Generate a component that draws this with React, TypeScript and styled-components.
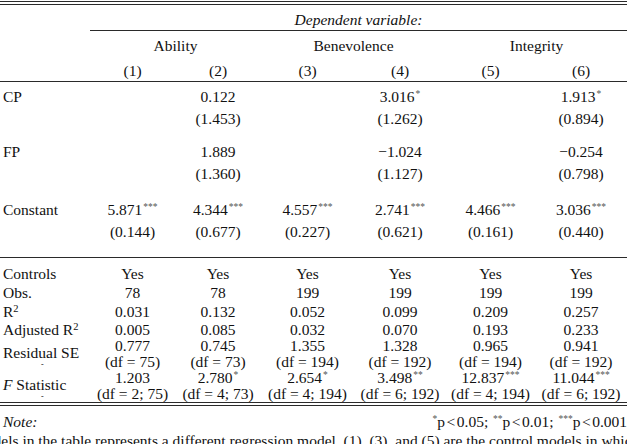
import styled, { createGlobalStyle } from 'styled-components';

const GlobalStyle = createGlobalStyle`
  html, body {
    margin: 0;
    padding: 0;
    background: #ffffff;
    overflow: hidden;
  }
  body {
    font-family: "Liberation Serif", "Times New Roman", serif;
    font-size: 15.5px;
    color: #111111;
  }
`;

const Page = styled.div`
  width: 627px;
`;

const DoubleRule = styled.div<{ $top?: number }>`
  margin-top: ${(p) => p.$top ?? 0}px;
  height: 2px;
  border-top: 1px solid #2a2a2a;
  border-bottom: 1px solid #2a2a2a;
`;

const Table = styled.table`
  width: 627px;
  border-collapse: separate;
  border-spacing: 0;
  table-layout: fixed;
`;

const Cell = styled.td<{ $h: number; $pt?: number; $line?: 'top' | 'bottom' }>`
  height: ${(p) => p.$h}px;
  padding: ${(p) => p.$pt ?? 0}px 0 0 0;
  line-height: 16px;
  text-align: center;
  vertical-align: middle;
  white-space: nowrap;
  box-sizing: content-box;
  border-top: ${(p) => (p.$line === 'top' ? '1px solid #2a2a2a' : 'none')};
  border-bottom: ${(p) => (p.$line === 'bottom' ? '1px solid #2a2a2a' : 'none')};
`;

const Label = styled(Cell)`
  text-align: left;
  text-indent: 3px;
`;

const Italic = styled.span`
  font-style: italic;
`;

const Stars = styled.sup`
  font-size: 9.5px;
  line-height: 0;
  vertical-align: 5px;
  color: #555;
  margin-left: 1px;
  text-indent: 0;
`;

const Sq = styled.sup`
  font-size: 10.5px;
  line-height: 0;
  vertical-align: 5px;
`;

const Rel = styled.span`
  margin: 0 1.5px;
`;

const Stack = styled.div`
  display: flex;
  flex-direction: column;
  align-items: center;
  line-height: 16px;
`;

const LabelStack = styled.div`
  display: flex;
  flex-direction: column;
  align-items: flex-start;
  padding-top: 6px;
`;

const Dash = styled.span`
  font-size: 8px;
  line-height: 8px;
  margin-left: 38px;
`;

const NoteRow = styled.div`
  display: flex;
  justify-content: space-between;
  align-items: center;
  padding: 8px 0 0 3px;
  line-height: 16px;
`;

const Caption = styled.p`
  margin: 3px 0 0 0;
  line-height: 16px;
  white-space: nowrap;
  overflow: hidden;
  text-indent: -28px;
`;

type Val = { v: string; s?: string };

const cols = [90, 85, 86, 93, 92, 89, 92];

const coefRows: { name: string; est: (Val | null)[]; se: (string | null)[]; gap: number }[] = [
  {
    name: 'CP',
    est: [null, { v: '0.122' }, null, { v: '3.016', s: '*' }, null, { v: '1.913', s: '*' }],
    se: [null, '(1.453)', null, '(1.262)', null, '(0.894)'],
    gap: 11,
  },
  {
    name: 'FP',
    est: [null, { v: '1.889' }, null, { v: '\u22121.024' }, null, { v: '\u22120.254' }],
    se: [null, '(1.360)', null, '(1.127)', null, '(0.798)'],
    gap: 14,
  },
  {
    name: 'Constant',
    est: [
      { v: '5.871', s: '***' },
      { v: '4.344', s: '***' },
      { v: '4.557', s: '***' },
      { v: '2.741', s: '***' },
      { v: '4.466', s: '***' },
      { v: '3.036', s: '***' },
    ],
    se: ['(0.144)', '(0.677)', '(0.227)', '(0.621)', '(0.161)', '(0.440)'],
    gap: 14,
  },
];

const stats: { name: React.ReactNode; vals: string[]; h: number; pt?: number }[] = [
  { name: 'Obs.', vals: ['78', '78', '199', '199', '199', '199'], h: 19 },
  {
    name: (
      <>
        R<Sq>2</Sq>
      </>
    ),
    vals: ['0.031', '0.132', '0.052', '0.099', '0.209', '0.257'],
    h: 19,
  },
  {
    name: (
      <>
        Adjusted R<Sq>2</Sq>
      </>
    ),
    vals: ['0.005', '0.085', '0.032', '0.070', '0.193', '0.233'],
    h: 16,
    pt: 1,
  },
];

const residual: [Val, string][] = [
  [{ v: '0.777' }, '(df = 75)'],
  [{ v: '0.745' }, '(df = 73)'],
  [{ v: '1.355' }, '(df = 194)'],
  [{ v: '1.328' }, '(df = 192)'],
  [{ v: '0.965' }, '(df = 194)'],
  [{ v: '0.941' }, '(df = 192)'],
];

const fstat: [Val, string][] = [
  [{ v: '1.203' }, '(df = 2; 75)'],
  [{ v: '2.780', s: '*' }, '(df = 4; 73)'],
  [{ v: '2.654', s: '*' }, '(df = 4; 194)'],
  [{ v: '3.498', s: '**' }, '(df = 6; 192)'],
  [{ v: '12.837', s: '***' }, '(df = 4; 194)'],
  [{ v: '11.044', s: '***' }, '(df = 6; 192)'],
];

const Value = ({ val }: { val: Val | null }) =>
  val ? (
    <>
      {val.v}
      {val.s && <Stars>{val.s}</Stars>}
    </>
  ) : null;

const TwoLineRow = ({ label, rows }: { label: React.ReactNode; rows: [Val, string][] }) => (
  <tr>
    <Label $h={32}>
      <LabelStack>
        <span>{label}</span>
        <Dash>-</Dash>
      </LabelStack>
    </Label>
    {rows.map(([a, b], i) => (
      <Cell key={i} $h={32}>
        <Stack>
          <span>
            <Value val={a} />
          </span>
          <span>{b}</span>
        </Stack>
      </Cell>
    ))}
  </tr>
);

const App = () => {
  return (
    <Page>
      <GlobalStyle />
      <DoubleRule $top={1} />
      <Table>
        <colgroup>
          {cols.map((w, i) => (
            <col key={i} style={{ width: w }} />
          ))}
        </colgroup>
        <thead>
          <tr>
            <Label $h={20} $pt={5} />
            <Cell $h={20} $pt={5} colSpan={6} $line='bottom'>
              <Italic>Dependent variable:</Italic>
            </Cell>
          </tr>
          <tr>
            <Label $h={30} />
            <Cell $h={30} colSpan={2}>Ability</Cell>
            <Cell $h={30} colSpan={2}>Benevolence</Cell>
            <Cell $h={30} colSpan={2}>Integrity</Cell>
          </tr>
          <tr>
            <Label $h={20} $line='bottom' />
            {[1, 2, 3, 4, 5, 6].map((n) => (
              <Cell key={n} $h={20} $line='bottom'>
                ({n})
              </Cell>
            ))}
          </tr>
        </thead>
        <tbody>
          <tr>
            <Label $h={4} colSpan={7} />
          </tr>
          {coefRows.map((r) => [
            <tr key={r.name}>
              <Label $h={22}>{r.name}</Label>
              {r.est.map((e, i) => (
                <Cell key={i} $h={22}>
                  <Value val={e} />
                </Cell>
              ))}
            </tr>,
            <tr key={r.name + '-se'}>
              <Label $h={22} />
              {r.se.map((e, i) => (
                <Cell key={i} $h={22}>
                  {e}
                </Cell>
              ))}
            </tr>,
            <tr key={r.name + '-gap'}>
              <Label $h={r.gap} colSpan={7} />
            </tr>,
          ])}
          <tr>
            <Label $h={19} $pt={6} $line='top'>
              Controls
            </Label>
            {[0, 1, 2, 3, 4, 5].map((i) => (
              <Cell key={i} $h={19} $pt={6} $line='top'>
                Yes
              </Cell>
            ))}
          </tr>
          {stats.map((s, idx) => (
            <tr key={idx}>
              <Label $h={s.h} $pt={s.pt}>
                {s.name}
              </Label>
              {s.vals.map((v, i) => (
                <Cell key={i} $h={s.h} $pt={s.pt}>
                  {v}
                </Cell>
              ))}
            </tr>
          ))}
          <TwoLineRow label='Residual SE' rows={residual} />
          <TwoLineRow
            label={
              <>
                <Italic>F</Italic> Statistic
              </>
            }
            rows={fstat}
          />
        </tbody>
      </Table>
      <DoubleRule />
      <NoteRow>
        <Italic>Note:</Italic>
        <span>
          <Stars>*</Stars>p<Rel>&lt;</Rel>0.05; <Stars>**</Stars>p<Rel>&lt;</Rel>0.01;{' '}
          <Stars>***</Stars>p<Rel>&lt;</Rel>0.001
        </span>
      </NoteRow>
      <Caption>
        Models in the table represents a different regression model. (1), (3), and (5) are the control models in which
      </Caption>
    </Page>
  );
};

export default App;
